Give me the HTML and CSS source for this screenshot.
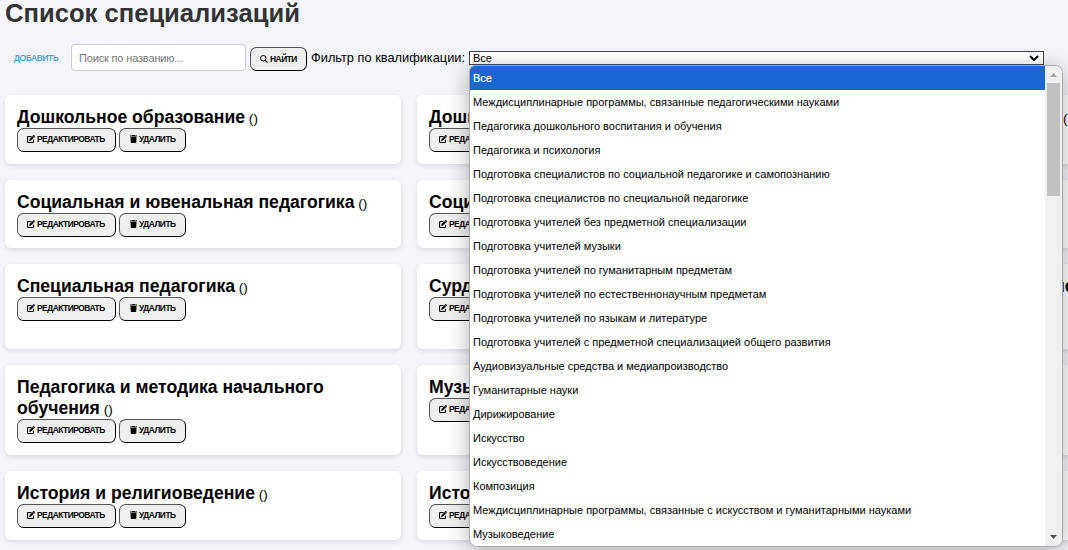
FILE: index.html
```html
<!DOCTYPE html>
<html lang="ru">
<head>
<meta charset="utf-8">
<title>Список специализаций</title>
<link rel="stylesheet" href="styles.css">
</head>
<body>
<svg class="symbols" aria-hidden="true">
  <symbol id="edit" viewBox="0 0 16 16"><path d="M9 3H3Q1 3 1 5V13Q1 15 3 15H11Q13 15 13 13V9.500" fill="none" stroke="currentColor" stroke-width="2.300"/><path d="M5.500 7.800 11 2.300 13.700 5 8.200 10.500 4.700 11.300ZM11.700 1.600 12.700.6Q13.400 0 14.100.6L15.400 1.900Q16 2.600 15.400 3.300L14.400 4.300Z" fill="currentColor" stroke="currentColor" stroke-width=".6"/></symbol>
  <symbol id="trash" viewBox="0 0 14 16"><path d="M0 1H4L5 0H9L10 1H14V3.200H0ZM1 4H13L12.500 14.500Q12.200 16 10.700 16H3.300Q1.800 16 1.500 14.500Z" fill="currentColor"/></symbol>
  <symbol id="search" viewBox="0 0 16 16"><circle cx="6.500" cy="6.500" r="5.500" fill="none" stroke="currentColor" stroke-width="2"/><path d="m10.500 10.500 4.500 4.500" stroke="currentColor" stroke-width="2.500"/></symbol>
</svg>
<main class="page">
  <h1 class="heading">Список специализаций</h1>
  <div class="toolbar">
    <a class="add">ДОБАВИТЬ</a>
    <input class="search" type="text" placeholder="Поиск по названию...">
    <button class="btn find"><svg class="icon"><use href="#search"/></svg><span>НАЙТИ</span></button>
    <span class="filter-label">Фильтр по квалификации:</span>
    <div class="select"><span>Все</span><svg class="chevron" viewBox="0 0 10 6"><path d="m1 1 4 4 4-4" fill="none" stroke="#000" stroke-width="2"/></svg>
      <div class="menu">
        <ul class="options">
          <li class="option active">Все</li>
          <li class="option">Междисциплинарные программы, связанные педагогическими науками</li>
          <li class="option">Педагогика дошкольного воспитания и обучения</li>
          <li class="option">Педагогика и психология</li>
          <li class="option">Подготовка специалистов по социальной педагогике и самопознанию</li>
          <li class="option">Подготовка специалистов по специальной педагогике</li>
          <li class="option">Подготовка учителей без предметной специализации</li>
          <li class="option">Подготовка учителей музыки</li>
          <li class="option">Подготовка учителей по гуманитарным предметам</li>
          <li class="option">Подготовка учителей по естественнонаучным предметам</li>
          <li class="option">Подготовка учителей по языкам и литературе</li>
          <li class="option">Подготовка учителей с предметной специализацией общего развития</li>
          <li class="option">Аудиовизуальные средства и медиапроизводство</li>
          <li class="option">Гуманитарные науки</li>
          <li class="option">Дирижирование</li>
          <li class="option">Искусство</li>
          <li class="option">Искусствоведение</li>
          <li class="option">Композиция</li>
          <li class="option">Междисциплинарные программы, связанные с искусством и гуманитарными науками</li>
          <li class="option">Музыковедение</li>
        </ul>
        <div class="scrollbar">
          <svg class="arrow" viewBox="0 0 7 4"><path d="M0 4 3.500 0 7 4Z" fill="#a3a3a3"/></svg>
          <div class="thumb"></div>
          <svg class="arrow down" viewBox="0 0 7 4"><path d="M0 0H7L3.500 4Z" fill="#505050"/></svg>
        </div>
      </div>
    </div>
  </div>
  <div class="cards">
    <article class="card"><div class="title"><b>Дошкольное образование</b> ()</div><div class="actions"><button class="btn edit"><svg class="icon"><use href="#edit"/></svg><span>РЕДАКТИРОВАТЬ</span></button><button class="btn delete"><svg class="icon bin"><use href="#trash"/></svg><span>УДАЛИТЬ</span></button></div></article>
    <article class="card"><div class="title"><b>Дошк</b></div><div class="actions"><button class="btn edit"><svg class="icon"><use href="#edit"/></svg><span>РЕДАКТИРОВАТЬ</span></button></div></article>
    <article class="card"><div class="title tail"><b></b>()</div></article>

    <article class="card"><div class="title"><b>Социальная и ювенальная педагогика</b> ()</div><div class="actions"><button class="btn edit"><svg class="icon"><use href="#edit"/></svg><span>РЕДАКТИРОВАТЬ</span></button><button class="btn delete"><svg class="icon bin"><use href="#trash"/></svg><span>УДАЛИТЬ</span></button></div></article>
    <article class="card"><div class="title"><b>Соци</b></div><div class="actions"><button class="btn edit"><svg class="icon"><use href="#edit"/></svg><span>РЕДАКТИРОВАТЬ</span></button></div></article>
    <article class="card"></article>

    <article class="card"><div class="title"><b>Специальная педагогика</b> ()</div><div class="actions"><button class="btn edit"><svg class="icon"><use href="#edit"/></svg><span>РЕДАКТИРОВАТЬ</span></button><button class="btn delete"><svg class="icon bin"><use href="#trash"/></svg><span>УДАЛИТЬ</span></button></div></article>
    <article class="card"><div class="title"><b>Сурд</b></div><div class="actions"><button class="btn edit"><svg class="icon"><use href="#edit"/></svg><span>РЕДАКТИРОВАТЬ</span></button></div></article>
    <article class="card"><div class="title tail-bold"><b>ис</b></div></article>

    <article class="card"><div class="title"><b>Педагогика и методика начального обучения</b> ()</div><div class="actions"><button class="btn edit"><svg class="icon"><use href="#edit"/></svg><span>РЕДАКТИРОВАТЬ</span></button><button class="btn delete"><svg class="icon bin"><use href="#trash"/></svg><span>УДАЛИТЬ</span></button></div></article>
    <article class="card"><div class="title"><b>Музы</b></div><div class="actions"><button class="btn edit"><svg class="icon"><use href="#edit"/></svg><span>РЕДАКТИРОВАТЬ</span></button></div></article>
    <article class="card"></article>

    <article class="card"><div class="title"><b>История и религиоведение</b> ()</div><div class="actions"><button class="btn edit"><svg class="icon"><use href="#edit"/></svg><span>РЕДАКТИРОВАТЬ</span></button><button class="btn delete"><svg class="icon bin"><use href="#trash"/></svg><span>УДАЛИТЬ</span></button></div></article>
    <article class="card"><div class="title"><b>Исто</b></div><div class="actions"><button class="btn edit"><svg class="icon"><use href="#edit"/></svg><span>РЕДАКТИРОВАТЬ</span></button></div></article>
    <article class="card"></article>
  </div>
</main>
</body>
</html>
```
FILE: styles.css
```css
* { box-sizing: border-box; }
html { overflow: hidden; }
body { margin: 0; background: #f4f5fa; color: #000; font-family: "Liberation Sans", Arial, sans-serif; overflow: hidden; height: 550px; }
.symbols { display: none; }
.page { padding-left: 5px; width: 1068px; height: 550px; overflow: hidden; }
.heading { margin: 0; height: 44px; font-size: 25.6px; line-height: 27px; color: #333; }
.toolbar { display: flex; height: 51px; }
.add { width: 66px; padding: 8px 0 0 9px; font-size: 8.6px; line-height: 12px; letter-spacing: -.25px; color: #3498db; -webkit-text-stroke: .2px #3498db; }
.search { width: 175px; height: 27px; margin: 0; padding: 0 7px; border: 1px solid #ccc; border-radius: 4px; background: #fff; font: 11px "Liberation Sans", Arial, sans-serif; letter-spacing: -.16px; }
.search::placeholder { color: #757575; }
.btn { display: flex; align-items: center; height: 24px; margin: 0; padding: 0 0 2px; border: 1px solid #000; border-top-color: #555; border-left-color: #555; border-radius: 6.500px; background: #efefef; color: #000; font: bold 8.4px/12px "Liberation Sans", Arial, sans-serif; letter-spacing: -.48px; white-space: nowrap; }
.find { width: 57px; margin: 3px 0 0 4px; padding: 0 0 0 9px; gap: 2px; }
.edit { width: 99px; padding-left: 9px; gap: 2px; }
.delete { width: 67px; padding-left: 10px; gap: 2px; }
.icon { width: 8px; height: 8px; flex: none; }
.bin { width: 7px; }
.filter-label { width: 158px; margin-left: 4px; padding-top: 6px; font-size: 12.8px; line-height: 16px; white-space: nowrap; }
.select { position: relative; display: flex; justify-content: space-between; align-items: center; width: 575px; height: 14px; margin-top: 7px; padding: 0 4px 0 3px; border: 1px solid #444; background: #fff; font-size: 11px; line-height: 12px; }
.chevron { width: 10px; height: 6px; }
.menu { position: absolute; z-index: 2; top: 13px; left: -1px; display: flex; width: 594px; height: 482px; overflow: hidden; border: 1px solid #aaa; border-radius: 6px 8px 8px 8px; background: #fff; box-shadow: 0 4px 22px rgba(0,0,0,.3); }
.options { flex: 1; margin: 0; padding: 0; list-style: none; }
.option { height: 24px; padding-left: 3px; font-size: 11px; line-height: 24px; white-space: nowrap; }
.active { background: #1967d2; color: #fff; -webkit-text-stroke: .2px #fff; }
.scrollbar { display: flex; flex-direction: column; align-items: center; width: 17px; background: #f0f0f0; padding: 7px 0; }
.arrow { width: 7px; height: 4px; flex: none; }
.thumb { width: 13px; height: 113px; margin-top: 6px; background: #c1c1c1; }
.down { margin-top: auto; }
.cards { display: grid; grid-template-columns: repeat(3, 396px); grid-template-rows: 69px 68px 85px 90px 69px; gap: 16px; }
.card { padding: 12px; border-radius: 6px; background: #fff; box-shadow: 0 2px 5px rgba(0,0,0,.1); }
.title { font-size: 13.600px; line-height: 15px; }
.title b { font-size: 17.6px; line-height: 21px; }
.tail { padding-left: 222px; line-height: 21px; }
.tail-bold { padding-left: 213px; }
.actions { display: flex; gap: 3px; }
```
